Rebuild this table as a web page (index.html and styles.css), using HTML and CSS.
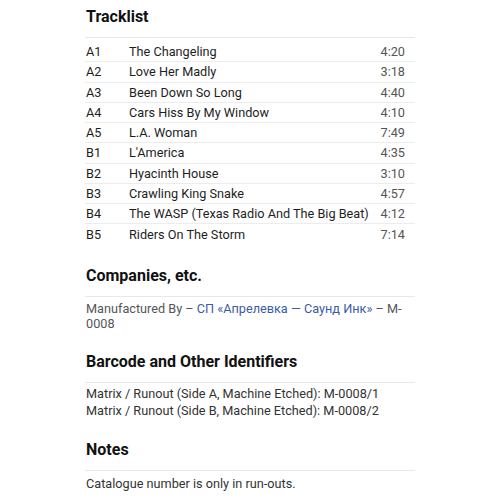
FILE: index.html
```html
<!DOCTYPE html>
<html>
<head>
<meta charset="utf-8">
<link rel="stylesheet" href="styles.css">
</head>
<body>
<main class="page">
  <section class="section tracklist-section">
    <h2 class="heading">Tracklist</h2>
    <div class="tracklist">
      <div class="track"><span class="pos">A1</span><span class="title">The Changeling</span><span class="dur">4:20</span></div>
      <div class="track"><span class="pos">A2</span><span class="title">Love Her Madly</span><span class="dur">3:18</span></div>
      <div class="track"><span class="pos">A3</span><span class="title">Been Down So Long</span><span class="dur">4:40</span></div>
      <div class="track"><span class="pos">A4</span><span class="title">Cars Hiss By My Window</span><span class="dur">4:10</span></div>
      <div class="track"><span class="pos">A5</span><span class="title">L.A. Woman</span><span class="dur">7:49</span></div>
      <div class="track"><span class="pos">B1</span><span class="title">L'America</span><span class="dur">4:35</span></div>
      <div class="track"><span class="pos">B2</span><span class="title">Hyacinth House</span><span class="dur">3:10</span></div>
      <div class="track"><span class="pos">B3</span><span class="title">Crawling King Snake</span><span class="dur">4:57</span></div>
      <div class="track"><span class="pos">B4</span><span class="title">The WASP (Texas Radio And The Big Beat)</span><span class="dur">4:12</span></div>
      <div class="track"><span class="pos">B5</span><span class="title">Riders On The Storm</span><span class="dur">7:14</span></div>
    </div>
  </section>

  <section class="section">
    <h2 class="heading">Companies, etc.</h2>
    <p class="text companies">Manufactured By – <a class="link" href="#">СП «Апрелевка — Саунд Инк»</a> – M-0008</p>
  </section>

  <section class="section">
    <h2 class="heading">Barcode and Other Identifiers</h2>
    <div class="identifiers">
      <div class="text ident">Matrix / Runout (Side A, Machine Etched): M-0008/1</div>
      <div class="text ident">Matrix / Runout (Side B, Machine Etched): M-0008/2</div>
    </div>
  </section>

  <section class="section">
    <h2 class="heading">Notes</h2>
    <p class="text notes">Catalogue number is only in run-outs.</p>
  </section>
</main>
</body>
</html>
```

FILE: styles.css
```css
html, body {
  margin: 0;
  padding: 0;
  background: #ffffff;
}

body {
  font-family: Roboto, "Noto Sans", "Liberation Sans", sans-serif;
  color: #222222;
}

.page {
  width: 330px;
  margin: 0 auto;
  padding-top: 6px;
}

.section + .section {
  margin-top: 20px;
}

.heading {
  margin: 0;
  font-size: 16px;
  font-weight: 700;
  line-height: 22px;
  color: #111111;
  padding-left: 1px;
  padding-bottom: 9px;
  border-bottom: 1px solid #e8e8e8;
}

.tracklist {
  margin-top: 4px;
}

.track {
  display: flex;
  align-items: center;
  height: 20.25px;
  box-sizing: border-box;
  font-size: 12.7px;
  color: #1e1e1e;
  border-bottom: 1px solid #ececec;
}

.track:last-child {
  border-bottom: none;
}

.pos {
  width: 44px;
  padding-left: 1px;
  box-sizing: border-box;
  flex: none;
}

.title {
  flex: 1;
}

.dur {
  flex: none;
  padding-right: 10px;
  color: #555555;
}

.text {
  font-size: 12.7px;
  color: #333333;
}

.companies {
  margin: 4.5px 0 0;
  line-height: 15px;
  color: #555555;
  padding-left: 1px;
}

.link {
  color: #3b5ba8;
  text-decoration: none;
}

.identifiers {
  margin-top: 3px;
  padding-left: 1px;
}

.ident {
  line-height: 16.7px;
}

.notes {
  margin: 4px 0 0;
  line-height: 17px;
  padding-left: 1px;
}
```
